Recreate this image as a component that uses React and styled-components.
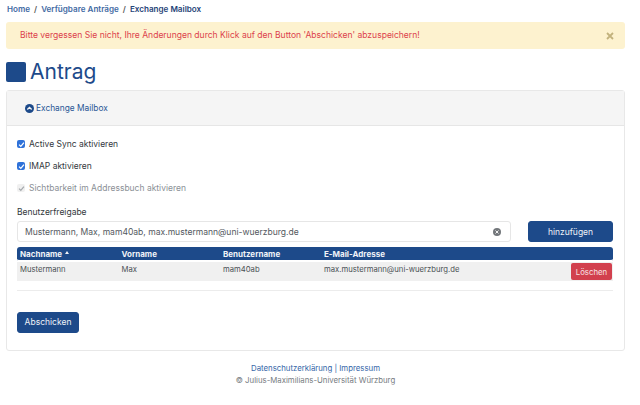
import React from 'react';
import styled, { createGlobalStyle } from 'styled-components';

const blue = '#1d4a8a';

const GlobalStyle = createGlobalStyle`
  html, body {
    margin: 0;
    padding: 0;
    background: #fff;
  }
  body {
    font-family: Inter, "Liberation Sans", sans-serif;
    color: #33383d;
  }
`;

const Page = styled.div`
  width: 619px;
  margin-left: 6px;
  height: 405px;
  overflow: hidden;
`;

const Breadcrumb = styled.nav`
  display: flex;
  align-items: center;
  height: 22px;
  padding: 0 0 4px 1px;
  box-sizing: border-box;
  font-size: 8.1px;
  font-weight: 600;
  color: #49668f;
`;

const Crumb = styled.span`
  color: ${(p) => (p.$current ? '#1f4478' : '#3f6aa3')};
`;

const Slash = styled.span`
  margin: 0 4px;
  color: #555;
`;

const Alert = styled.div`
  display: flex;
  align-items: center;
  justify-content: space-between;
  height: 27px;
  padding: 0 11px 1px 14px;
  box-sizing: border-box;
  background: #fdf2cf;
  border-radius: 3px;
  color: #dc3f4c;
  font-size: 8.55px;
`;

const Close = styled.svg`
  width: 8px;
  height: 8px;
  margin-top: 2px;
`;

const Heading = styled.h1`
  display: flex;
  align-items: center;
  gap: 4px;
  margin: 10px 0 6px;
  height: 25px;
  font-size: 21px;
  font-weight: 400;
  color: ${blue};
`;

const Square = styled.span`
  width: 20px;
  height: 20px;
  border-radius: 2px;
  background: ${blue};
`;

const Card = styled.section`
  height: 261px;
  box-sizing: border-box;
  border: 1px solid #e8e8e8;
  border-radius: 3px;
`;

const CardHeader = styled.div`
  display: flex;
  align-items: center;
  gap: 2px;
  height: 35px;
  box-sizing: border-box;
  padding: 0 0 0 18px;
  background: #f5f5f5;
  border-bottom: 1px solid #e6e6e6;
  font-size: 8.35px;
  color: #2a5796;
`;

const CardBody = styled.div`
  padding: 7px 11px 0 10px;
`;

const CheckRow = styled.label`
  display: flex;
  align-items: center;
  gap: 4px;
  height: 22px;
  font-size: 8.5px;
  color: ${(p) => (p.$disabled ? '#8b9096' : '#33383d')};
`;

const Box = styled.span`
  display: flex;
  align-items: center;
  justify-content: center;
  width: 8px;
  height: 8px;
  border-radius: 2px;
  background: ${(p) => (p.$disabled ? '#f0f0f0' : '#2f72d9')};
`;

const FieldLabel = styled.div`
  margin-top: 7px;
  height: 15px;
  font-size: 8.5px;
  line-height: 12px;
  color: #33383d;
`;

const InputRow = styled.div`
  display: flex;
  gap: 17px;
  height: 21px;
`;

const SearchField = styled.div`
  display: flex;
  align-items: center;
  justify-content: space-between;
  width: 494px;
  box-sizing: border-box;
  padding: 0 9px 0 7px;
  border: 1px solid #e6e6e6;
  border-radius: 3px;
  font-size: 8.55px;
  color: #53585e;
`;

const ClearDot = styled.svg`
  width: 8px;
  height: 8px;
`;

const Button = styled.button`
  border: 1px solid ${blue};
  border-radius: 3px;
  background: ${blue};
  color: #eef2f7;
  padding: 0;
  font-family: inherit;
  font-size: 8.5px;
  width: ${(p) => p.$width}px;
  height: 21px;
`;

const Table = styled.table`
  width: 596px;
  margin-top: 5px;
  border-collapse: separate;
  border-spacing: 0;
  table-layout: fixed;
  font-size: 7.7px;
`;

const HeadCell = styled.th`
  height: 13px;
  padding: 0 0 0 3px;
  background: ${blue};
  color: #f0f3f8;
  font-weight: 700;
  font-size: 8px;
  text-align: left;
  border-bottom: 2px solid #fff;
  box-sizing: content-box;
  &:first-child {
    border-radius: 3px 0 0 3px;
  }
  &:last-child {
    border-radius: 0 3px 3px 0;
  }
`;

const SortArrow = styled.span`
  display: inline-block;
  margin-left: 3px;
  vertical-align: 3px;
  border-left: 2.5px solid transparent;
  border-right: 2.5px solid transparent;
  border-bottom: 3px solid #f0f3f8;
`;

const Cell = styled.td`
  height: 19px;
  padding: 0 0 5px 3px;
  box-sizing: border-box;
  background: #f0f0f0;
  color: #4b5055;
  vertical-align: middle;
`;

const ActionCell = styled.td`
  height: 19px;
  padding: 1px 1px 0 0;
  box-sizing: border-box;
  background: #f0f0f0;
  text-align: right;
  vertical-align: top;
`;

const DeleteButton = styled.button`
  width: 41px;
  height: 17px;
  padding: 0;
  border: 0;
  border-radius: 2px;
  background: #d2404e;
  color: #f7e3e5;
  font-family: inherit;
  font-size: 7.8px;
`;

const Divider = styled.hr`
  width: 596px;
  margin: 9px 0 18px;
  border: 0;
  border-top: 1px solid #ececec;
`;

const Footer = styled.footer`
  margin-top: 11px;
  text-align: center;
  font-size: 7.8px;
  line-height: 12px;
  color: #777c82;
`;

const FooterLink = styled.span`
  color: #3566a8;
`;

const ChevronUpCircle = () => (
  <svg width="9" height="9" viewBox="0 0 10 10">
    <circle cx="5" cy="5" r="5" fill="#1d4a8a" />
    <path d="M2.6 6.1 L5 3.7 L7.4 6.1" fill="none" stroke="#f5f5f5" strokeWidth="1.5" />
  </svg>
);

const Tick = ({ color }) => (
  <svg width="7" height="7" viewBox="0 0 8 8">
    <path d="M1.2 4.2 L3.2 6.2 L6.8 1.8" fill="none" stroke={color} strokeWidth="1.4" />
  </svg>
);

const columns = [
  { title: 'Nachname', width: 101.5, sorted: true },
  { title: 'Vorname', width: 101.5 },
  { title: 'Benutzername', width: 101 },
  { title: 'E-Mail-Adresse', width: 248 },
  { title: '', width: 44 },
];

const checks = [
  { label: 'Active Sync aktivieren' },
  { label: 'IMAP aktivieren' },
  { label: 'Sichtbarkeit im Addressbuch aktivieren', disabled: true },
];

const App = () => (
  <>
    <GlobalStyle />
    <Page>
      <Breadcrumb>
        <Crumb>Home</Crumb>
        <Slash>/</Slash>
        <Crumb>Verfügbare Anträge</Crumb>
        <Slash>/</Slash>
        <Crumb $current>Exchange Mailbox</Crumb>
      </Breadcrumb>
      <Alert>
        <span>Bitte vergessen Sie nicht, Ihre Änderungen durch Klick auf den Button 'Abschicken' abzuspeichern!</span>
        <Close viewBox="0 0 8 8">
          <path d="M1 1 L7 7 M7 1 L1 7" stroke="#c2b27d" strokeWidth="1.8" />
        </Close>
      </Alert>
      <Heading>
        <Square />
        Antrag
      </Heading>
      <Card>
        <CardHeader>
          <ChevronUpCircle />
          Exchange Mailbox
        </CardHeader>
        <CardBody>
          {checks.map((c) => (
            <CheckRow key={c.label} $disabled={c.disabled}>
              <Box $disabled={c.disabled}>
                <Tick color={c.disabled ? '#a5a9ad' : '#fff'} />
              </Box>
              {c.label}
            </CheckRow>
          ))}
          <FieldLabel>Benutzerfreigabe</FieldLabel>
          <InputRow>
            <SearchField>
              Mustermann, Max, mam40ab, max.mustermann@uni-wuerzburg.de
              <ClearDot viewBox="0 0 8 8">
                <circle cx="4" cy="4" r="4" fill="#73777b" />
                <path d="M2.5 2.5 L5.5 5.5 M5.5 2.5 L2.5 5.5" stroke="#fff" strokeWidth="0.9" />
              </ClearDot>
            </SearchField>
            <Button $width={85}>hinzufügen</Button>
          </InputRow>
          <Table>
            <colgroup>
              {columns.map((c) => (
                <col key={c.title} width={c.width} />
              ))}
            </colgroup>
            <thead>
              <tr>
                {columns.map((c) => (
                  <HeadCell key={c.title}>
                    {c.title}
                    {c.sorted && <SortArrow />}
                  </HeadCell>
                ))}
              </tr>
            </thead>
            <tbody>
              <tr>
                <Cell>Mustermann</Cell>
                <Cell>Max</Cell>
                <Cell>mam40ab</Cell>
                <Cell>max.mustermann@uni-wuerzburg.de</Cell>
                <ActionCell>
                  <DeleteButton>Löschen</DeleteButton>
                </ActionCell>
              </tr>
            </tbody>
          </Table>
          <Divider />
          <Button $width={62}>Abschicken</Button>
        </CardBody>
      </Card>
      <Footer>
        <FooterLink>Datenschutzerklärung | Impressum</FooterLink>
        <br />
        © Julius-Maximilians-Universität Würzburg
      </Footer>
    </Page>
  </>
);

export default App;
